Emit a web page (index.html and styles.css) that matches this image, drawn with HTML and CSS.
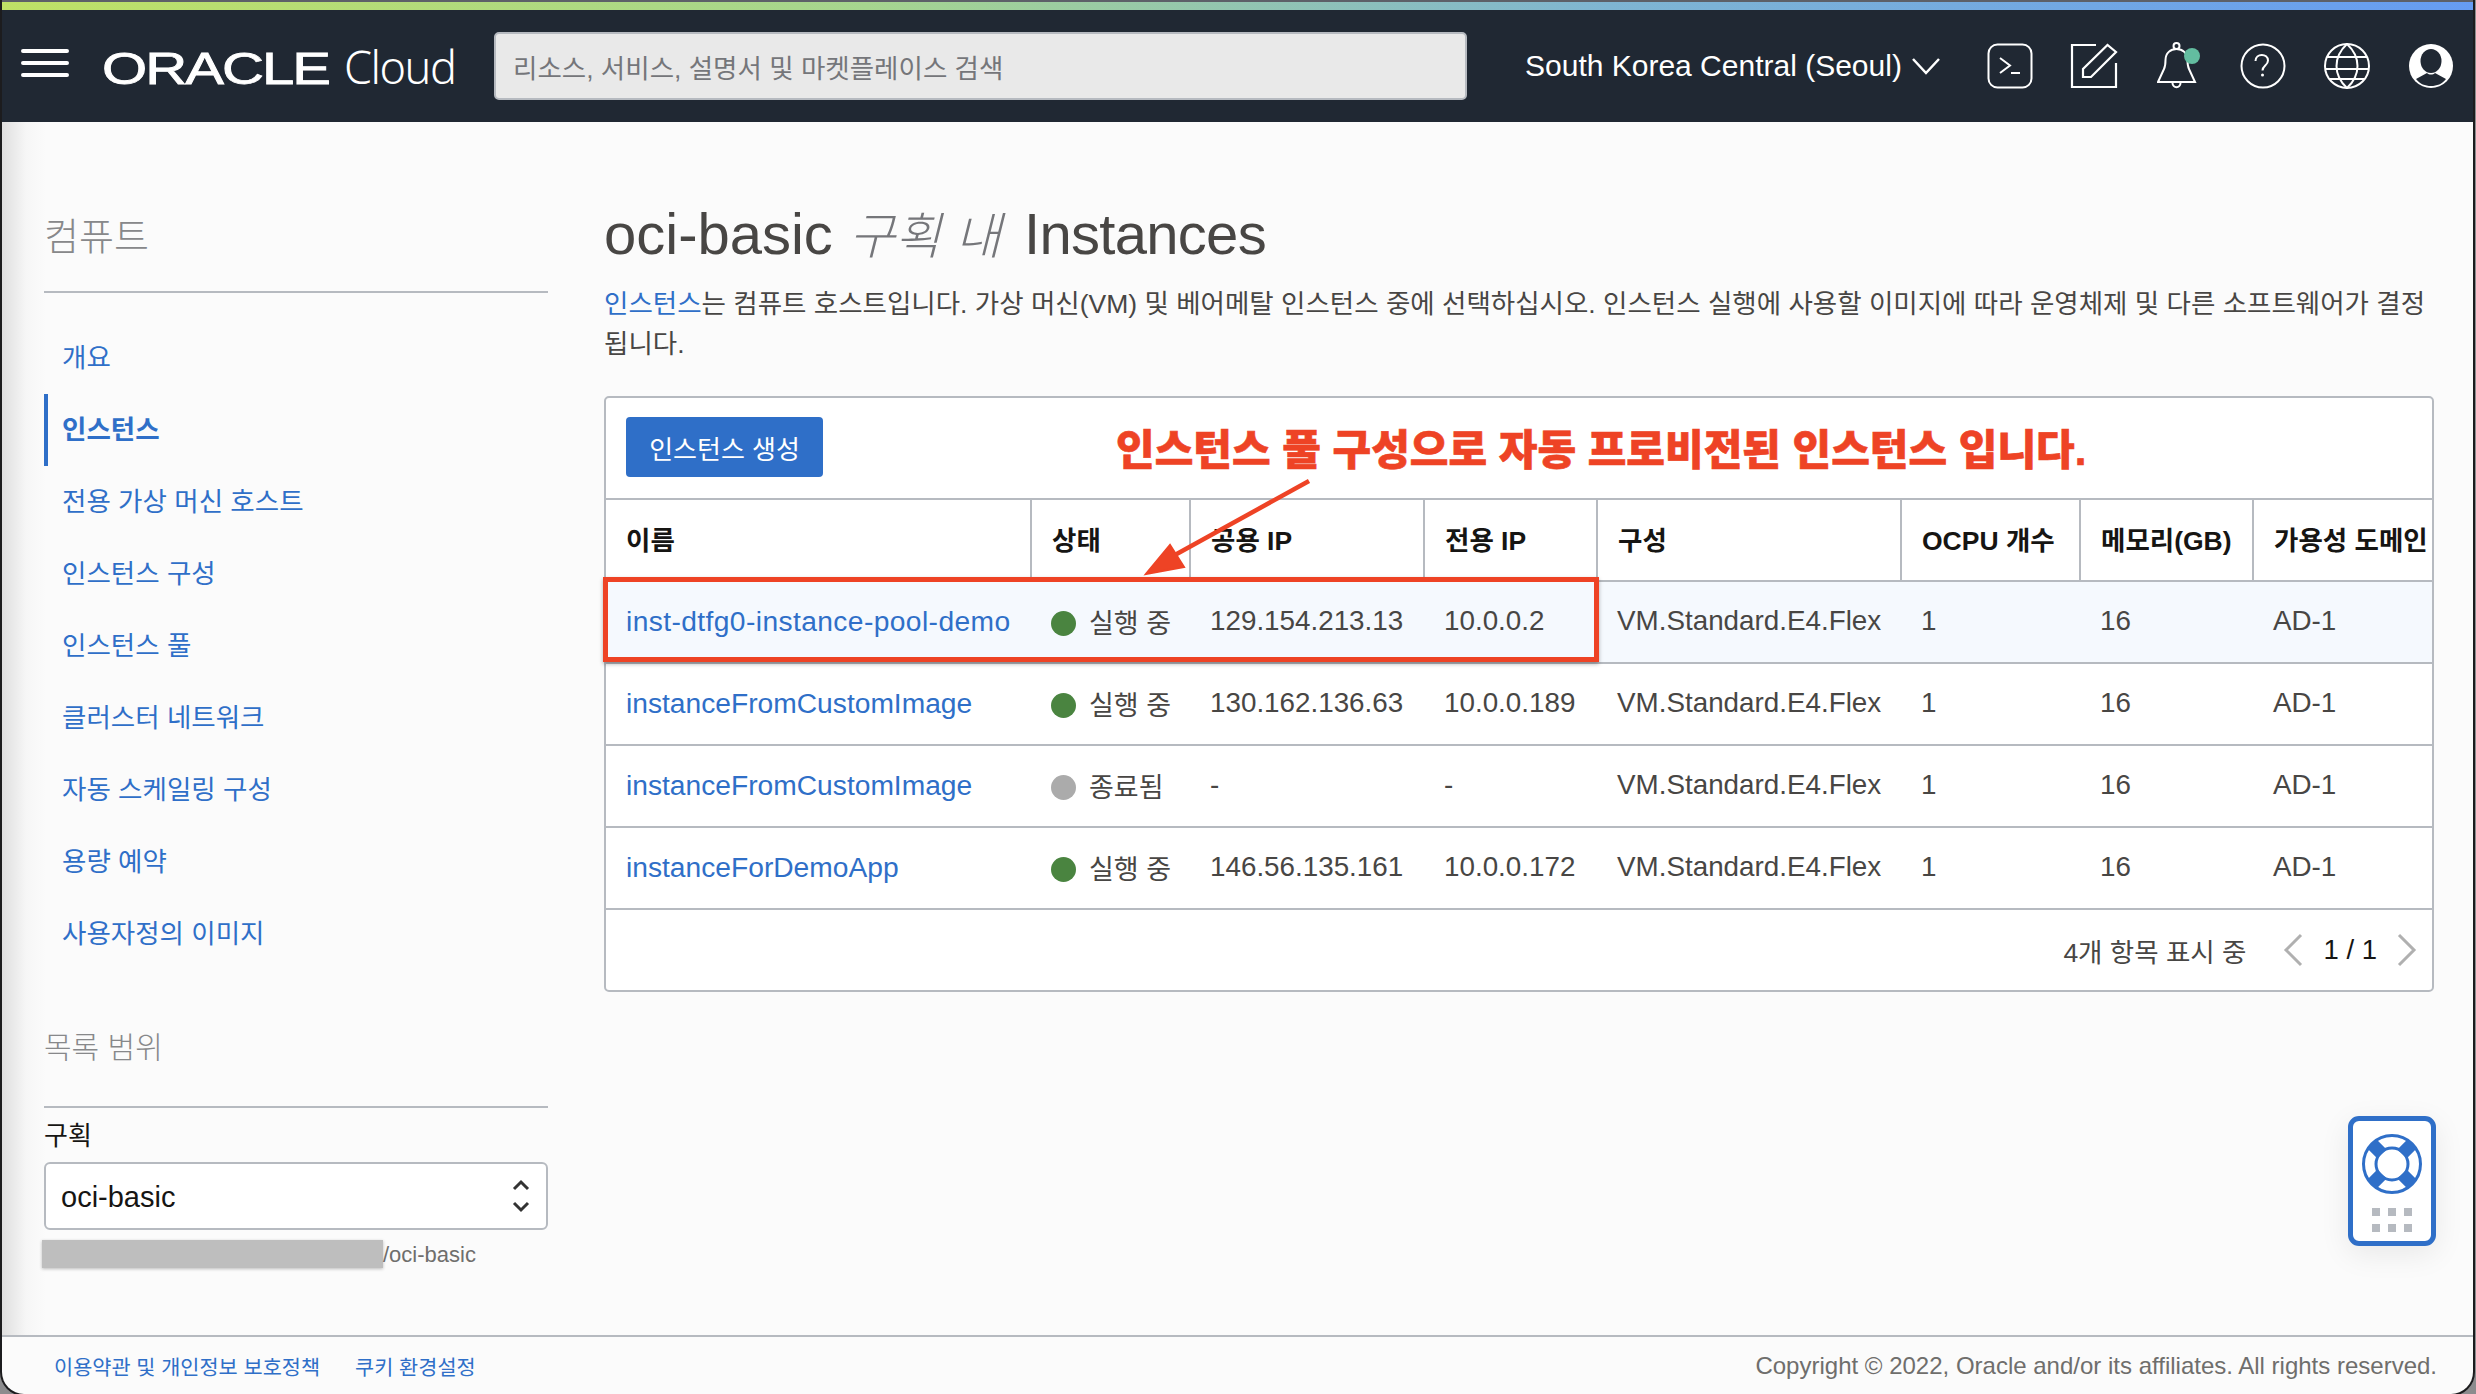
FILE: index.html
```html
<!doctype html>
<html lang="ko">

<head>
    <meta charset="utf-8">
    <title>Instances</title>
    <link rel="stylesheet" href="styles.css">
</head>

<body>
    <div class="window">
        <div class="stripe"></div>
        <header class="topbar">
            <svg class="burger" width="48" height="30" viewBox="0 0 48 30"><path d="M2 3h44M2 15h44M2 27h44" stroke="#fff" stroke-width="4" stroke-linecap="round"/></svg>
            <div class="brand"><span class="brand-mark">ORACLE</span><span class="brand-cloud">Cloud</span></div>
            <div class="search">리소스, 서비스, 설명서 및 마켓플레이스 검색</div>
            <div class="region">South Korea Central (Seoul)
                <svg width="30" height="18" viewBox="0 0 30 18"><path d="M2 2l13 14L28 2" fill="none" stroke="#fff" stroke-width="2.5"/></svg>
            </div>
            <div class="tools">
                <svg width="46" height="46" viewBox="0 0 46 46" fill="none" stroke="#fff" stroke-width="2"><rect x="1.5" y="1.5" width="43" height="43" rx="9"/><path d="M13 15l10 7.5-10 7.5M24 30h9"/></svg>
                <svg width="50" height="46" viewBox="0 0 50 46" fill="none" stroke="#fff" stroke-width="2.2"><path d="M26 2H2v42h44V20"/><path d="M13 26v8h8l25-25-8.5-7z"/></svg>
                <svg width="46" height="48" viewBox="0 0 46 48" fill="none" stroke="#fff" stroke-width="2"><path d="M1 40l6-13c1.5-3 1.5-5 1.5-9 0-7 5-11 11-11s11 4 11 11c0 4 0 6 1.5 9l6 13z"/><circle cx="19.5" cy="4" r="3"/><path d="M15.500 41c0 5.500 8 5.500 8 0"/><circle cx="35" cy="14" r="8" fill="#63bda0" stroke="none"/></svg>
                <svg width="46" height="46" viewBox="0 0 46 46" fill="none" stroke="#fff" stroke-width="2"><circle cx="23" cy="23" r="21.500"/><path d="M15.500 18c0-8 12.500-8 12.500-.5 0 5-5.500 5-5.500 10"/><circle cx="22.500" cy="32" r="1.500" fill="#fff" stroke="none"/></svg>
                <svg width="48" height="46" viewBox="0 0 48 46" fill="none" stroke="#fff" stroke-width="2"><circle cx="24" cy="23" r="22"/><path d="M24 1C10 14 10 32 24 45 38 32 38 14 24 1zM4 14h40M2 26h44M6 36h36"/></svg>
                <svg width="46" height="46" viewBox="0 0 46 46"><circle cx="23" cy="23" r="22" fill="#fff"/><ellipse cx="23" cy="18" rx="10.500" ry="12" fill="#202833"/><path d="M8 36l11-6c2 2 6 2 8 0l11 6c-4 5-9 7-15 7s-11-2-15-7z" fill="#202833"/></svg>
            </div>
        </header>

        <div class="content">
            <aside class="sidebar">
                <h2 class="side-title">컴퓨트</h2>
                <nav class="side-nav">
                    <a>개요</a>
                    <a class="active">인스턴스</a>
                    <a>전용 가상 머신 호스트</a>
                    <a>인스턴스 구성</a>
                    <a>인스턴스 풀</a>
                    <a>클러스터 네트워크</a>
                    <a>자동 스케일링 구성</a>
                    <a>용량 예약</a>
                    <a>사용자정의 이미지</a>
                </nav>
                <h2 class="side-title scope-title">목록 범위</h2>
                <label class="scope-label">구획</label>
                <div class="select"><span class="select-value">oci-basic</span>
                    <svg width="18" height="34" viewBox="0 0 18 34" fill="none" stroke="#333" stroke-width="3"><path d="M2 10l7-7 7 7M2 24l7 7 7-7"/></svg>
                </div>
                <div class="path"><span class="redact"></span>/oci-basic</div>
            </aside>

            <main class="main">
                <h1 class="title">oci-basic <em>구획 내</em> <span class="title-kind">Instances</span></h1>
                <p class="intro"><a>인스턴스</a>는 컴퓨트 호스트입니다. 가상 머신(VM) 및 베어메탈 인스턴스 중에 선택하십시오. 인스턴스 실행에 사용할 이미지에 따라 운영체제 및 다른 소프트웨어가 결정됩니다.</p>

                <section class="panel">
                    <div class="toolbar"><button class="primary">인스턴스 생성</button></div>
                    <table class="grid">
                        <colgroup>
                            <col class="c-name"><col class="c-state"><col class="c-pub"><col class="c-priv"><col class="c-shape"><col class="c-ocpu"><col class="c-mem"><col class="c-ad">
                        </colgroup>
                        <thead>
                            <tr><th>이름</th><th>상태</th><th>공용 IP</th><th>전용 IP</th><th>구성</th><th>OCPU 개수</th><th>메모리(GB)</th><th>가용성 도메인</th></tr>
                        </thead>
                        <tbody>
                            <tr class="hl"><td><a>inst-dtfg0-instance-pool-demo</a></td><td class="state"><span class="dot run"></span>실행 중</td><td>129.154.213.13</td><td>10.0.0.2</td><td>VM.Standard.E4.Flex</td><td>1</td><td>16</td><td>AD-1</td></tr>
                            <tr><td><a>instanceFromCustomImage</a></td><td class="state"><span class="dot run"></span>실행 중</td><td>130.162.136.63</td><td>10.0.0.189</td><td>VM.Standard.E4.Flex</td><td>1</td><td>16</td><td>AD-1</td></tr>
                            <tr><td><a>instanceFromCustomImage</a></td><td class="state"><span class="dot off"></span>종료됨</td><td>-</td><td>-</td><td>VM.Standard.E4.Flex</td><td>1</td><td>16</td><td>AD-1</td></tr>
                            <tr><td><a>instanceForDemoApp</a></td><td class="state"><span class="dot run"></span>실행 중</td><td>146.56.135.161</td><td>10.0.0.172</td><td>VM.Standard.E4.Flex</td><td>1</td><td>16</td><td>AD-1</td></tr>
                        </tbody>
                    </table>
                    <div class="pager">
                        <span class="count">4개 항목 표시 중</span>
                        <svg width="20" height="34" viewBox="0 0 20 34" fill="none" stroke="#b0b0b0" stroke-width="3"><path d="M18 2L3 17l15 15"/></svg>
                        <span class="pages">1 / 1</span>
                        <svg width="20" height="34" viewBox="0 0 20 34" fill="none" stroke="#b0b0b0" stroke-width="3"><path d="M2 2l15 15L2 32"/></svg>
                    </div>
                </section>
            </main>
        </div>

        <footer class="footer">
            <div class="foot-links"><a>이용약관 및 개인정보 보호정책</a><a>쿠키 환경설정</a></div>
            <div class="copy">Copyright © 2022, Oracle and/or its affiliates. All rights reserved.</div>
        </footer>

        <!-- annotations sitting over the page -->
        <div class="note">인스턴스 풀 구성으로 자동 프로비전된 인스턴스 입니다.</div>
        <div class="redbox"></div>
        <svg class="arrow" width="190" height="110" viewBox="0 0 190 110"><path d="M183 4L38 84" stroke="#ee4325" stroke-width="4.5"/><path d="M20 97l24-29 14 22z" fill="#ee4325" stroke="#ee4325" stroke-width="2"/></svg>

        <div class="helper">
            <svg width="62" height="62" viewBox="0 0 62 62" fill="none" stroke="#2f6fc8"><circle cx="31" cy="31" r="28.5" stroke-width="3"/><circle cx="31" cy="31" r="16" stroke-width="3"/><path d="M11 11l10 10M51 11L41 21M11 51l10-10M51 51L41 41" stroke-width="13"/></svg>
            <div class="dots"><i></i><i></i><i></i><i></i><i></i><i></i></div>
        </div>
    </div>
</body>

</html>
```
FILE: styles.css
```css
* {
    box-sizing: border-box;
}

html, body {
    height: 100%;
}

body {
    margin: 0;
    background: #8c8c8e;
    overflow: hidden;
    font-family: "Liberation Sans", "Noto Sans CJK KR", sans-serif;
    font-size: 27px;
    color: #484644;
}

a {
    color: #2f6fc8;
}

.window {
    position: relative;
    height: 1394px;
    margin: 0 3px 0 2px;
    padding-top: 2px;
    display: flex;
    flex-direction: column;
    background: #fbfbfb;
    border-radius: 0 0 22px 22px;
    box-shadow: 0 0 0 2px #1c1c1e;
    overflow: hidden;
}

.stripe {
    height: 8px;
    background: linear-gradient(90deg, #bfe166 0%, #a6d58f 35%, #7fb5d2 65%, #669cf2 100%);
}

.window::before {
    content: "";
    position: absolute;
    top: 0;
    left: 0;
    right: 0;
    height: 2px;
    background: #5d6068;
}

.topbar {
    height: 112px;
    display: flex;
    align-items: center;
    background: #202833;
    color: #fff;
    padding-left: 19px;
}

.burger {
    margin-top: -6px;
}

.brand {
    width: 392px;
    margin-left: 33px;
    display: flex;
    align-items: baseline;
    white-space: nowrap;
}

.brand-mark {
    display: inline-block;
    width: 242px;
    font-size: 44px;
    font-weight: 400;
    -webkit-text-stroke: .8px #fff;
    transform: scaleX(1.32);
    transform-origin: left;
    letter-spacing: -1.5px;
}

.brand-cloud {
    font-size: 45px;
    font-weight: 300;
    font-family: "Noto Sans", sans-serif;
    letter-spacing: -1.5px;
}

.search {
    width: 973px;
    height: 68px;
    padding-left: 17px;
    display: flex;
    align-items: center;
    background: #e9e9e9;
    border: 2px solid #b6bac0;
    border-radius: 5px;
    color: #75767a;
    font-size: 26.5px;
}

.region {
    margin-left: 58px;
    display: flex;
    align-items: center;
    gap: 9px;
    font-size: 30px;
    white-space: nowrap;
}

.tools {
    margin-left: 46px;
    display: flex;
    align-items: center;
    gap: 37px;
}

.content {
    flex: 1;
    display: flex;
    background: linear-gradient(90deg, #dfdfdf 0, #f6f6f6 24px, #fbfbfb 44px);
}

.sidebar {
    width: 546px;
    flex: none;
    margin-left: 42px;
    display: flex;
    flex-direction: column;
}

.side-title {
    margin: 91px 0 0;
    padding-bottom: 28px;
    height: 80px;
    font-size: 38px;
    line-height: 48px;
    font-weight: 300;
    color: #87888a;
    border-bottom: 2px solid #b6bac0;
    width: 504px;
}

.side-nav {
    display: flex;
    flex-direction: column;
    margin-top: 29px;
    width: 504px;
}

.side-nav a {
    height: 72px;
    line-height: 72px;
    padding-left: 18px;
    font-size: 26.5px;
    white-space: nowrap;
}

.side-nav .active {
    font-weight: 700;
    border-left: 4px solid #2f6fc8;
    padding-left: 14px;
}

.scope-title {
    margin-top: 54px;
    height: 84px;
    font-size: 30px;
}

.scope-label {
    margin-top: 12px;
    font-size: 26px;
    line-height: 32px;
    color: #161513;
}

.select {
    width: 504px;
    height: 68px;
    margin-top: 10px;
    padding: 0 16px 0 15px;
    display: flex;
    align-items: center;
    justify-content: space-between;
    border: 2px solid #b6bac0;
    border-radius: 6px;
    background: #fff;
    color: #161513;
    font-size: 29px;
}

.select-value {
    padding-top: 3px;
}

.path {
    margin: 10px 0 0 -2px;
    display: flex;
    align-items: flex-end;
    font-size: 22px;
    color: #6f6e6c;
}

.redact {
    width: 341px;
    height: 28px;
    background: #bebebe;
    box-shadow: 0 1px 3px rgba(0, 0, 0, .25);
}

.main {
    width: 1830px;
    margin-left: 14px;
}

.title {
    margin: 77px 0 0;
    font-size: 58px;
    line-height: 70px;
    font-weight: 400;
    color: #484644;
    white-space: nowrap;
}

.title em {
    margin-right: 7px;
    font-size: 50px;
    font-weight: 300;
    color: #75767a;
}

.title-kind {
    letter-spacing: -.7px;
}

.intro {
    margin: 12px 0 0;
    line-height: 40px;
    font-size: 26.5px;
}

.panel {
    margin-top: 32px;
    border: 2px solid #b6bac0;
    border-radius: 5px;
    background: #fff;
}

.toolbar {
    height: 100px;
    padding: 19px 0 0 20px;
}

.primary {
    width: 197px;
    height: 60px;
    border: 0;
    border-radius: 4px;
    background: #2f6fc8;
    color: #fff;
    font: inherit;
    font-size: 26px;
}

.grid {
    width: 100%;
    table-layout: fixed;
    border-collapse: collapse;
}

.c-name { width: 425px; }
.c-state { width: 159px; }
.c-pub { width: 234px; }
.c-priv { width: 173px; }
.c-shape { width: 304px; }
.c-ocpu { width: 179px; }
.c-mem { width: 173px; }

.grid th {
    height: 82px;
    padding: 0 0 4px 20px;
    text-align: left;
    font-size: 26.5px;
    font-weight: 700;
    color: #161513;
    white-space: nowrap;
    border-top: 2px solid #b6bac0;
    border-left: 2px solid #b6bac0;
    border-bottom: 2px solid #b6bac0;
}

.grid th:first-child {
    border-left: 0;
}

.grid td {
    height: 82px;
    padding: 0 0 2px 20px;
    font-size: 27.8px;
    white-space: nowrap;
    border-bottom: 2px solid #b6bac0;
}

.grid td a {
    font-size: 28.2px;
}

.grid .state {
    font-size: 27px;
}

.hl a {
    letter-spacing: .4px;
}

.hl td {
    background: #f5f9fe;
}

.dot {
    display: inline-block;
    width: 25px;
    height: 25px;
    margin-right: 13px;
    border-radius: 50%;
    vertical-align: -3px;
}

.run {
    background: #4a8440;
}

.off {
    background: #ababab;
}

.pager {
    height: 80px;
    padding-right: 15px;
    display: flex;
    align-items: center;
    justify-content: flex-end;
}

.count {
    margin-right: 37px;
    font-size: 26.5px;
}

.pages {
    margin: 0 20px;
    color: #161513;
    font-size: 27.5px;
}

.footer {
    height: 59px;
    padding: 0 36px 0 52px;
    display: flex;
    align-items: center;
    justify-content: space-between;
    border-top: 2px solid #b6bac0;
    font-size: 20.8px;
}

.foot-links {
    display: flex;
    gap: 35px;
}

.copy {
    color: #6f6e6c;
    font-size: 24px;
}

.note {
    position: absolute;
    top: 421px;
    left: 1114px;
    color: #ee4325;
    font-size: 42px;
    line-height: 60px;
    font-weight: 900;
    -webkit-text-stroke: .6px #ee4325;
    white-space: nowrap;
}

.redbox {
    position: absolute;
    top: 577px;
    left: 601px;
    width: 996px;
    height: 85px;
    border: 5px solid #ee4325;
    box-shadow: 0 2px 4px rgba(0, 0, 0, .3);
}

.arrow {
    position: absolute;
    top: 477px;
    left: 1124px;
}

.helper {
    position: absolute;
    top: 1116px;
    left: 2346px;
    width: 88px;
    height: 130px;
    padding-top: 12px;
    display: flex;
    flex-direction: column;
    align-items: center;
    background: #fff;
    border: 5px solid #2f6fc8;
    border-radius: 11px;
    box-shadow: 0 8px 30px rgba(0, 0, 0, .08);
}

.dots {
    margin-top: 13px;
    display: grid;
    grid-template-columns: repeat(3, 8px);
    gap: 8px;
}

.dots i {
    height: 8px;
    background: #b6bac0;
}
```
